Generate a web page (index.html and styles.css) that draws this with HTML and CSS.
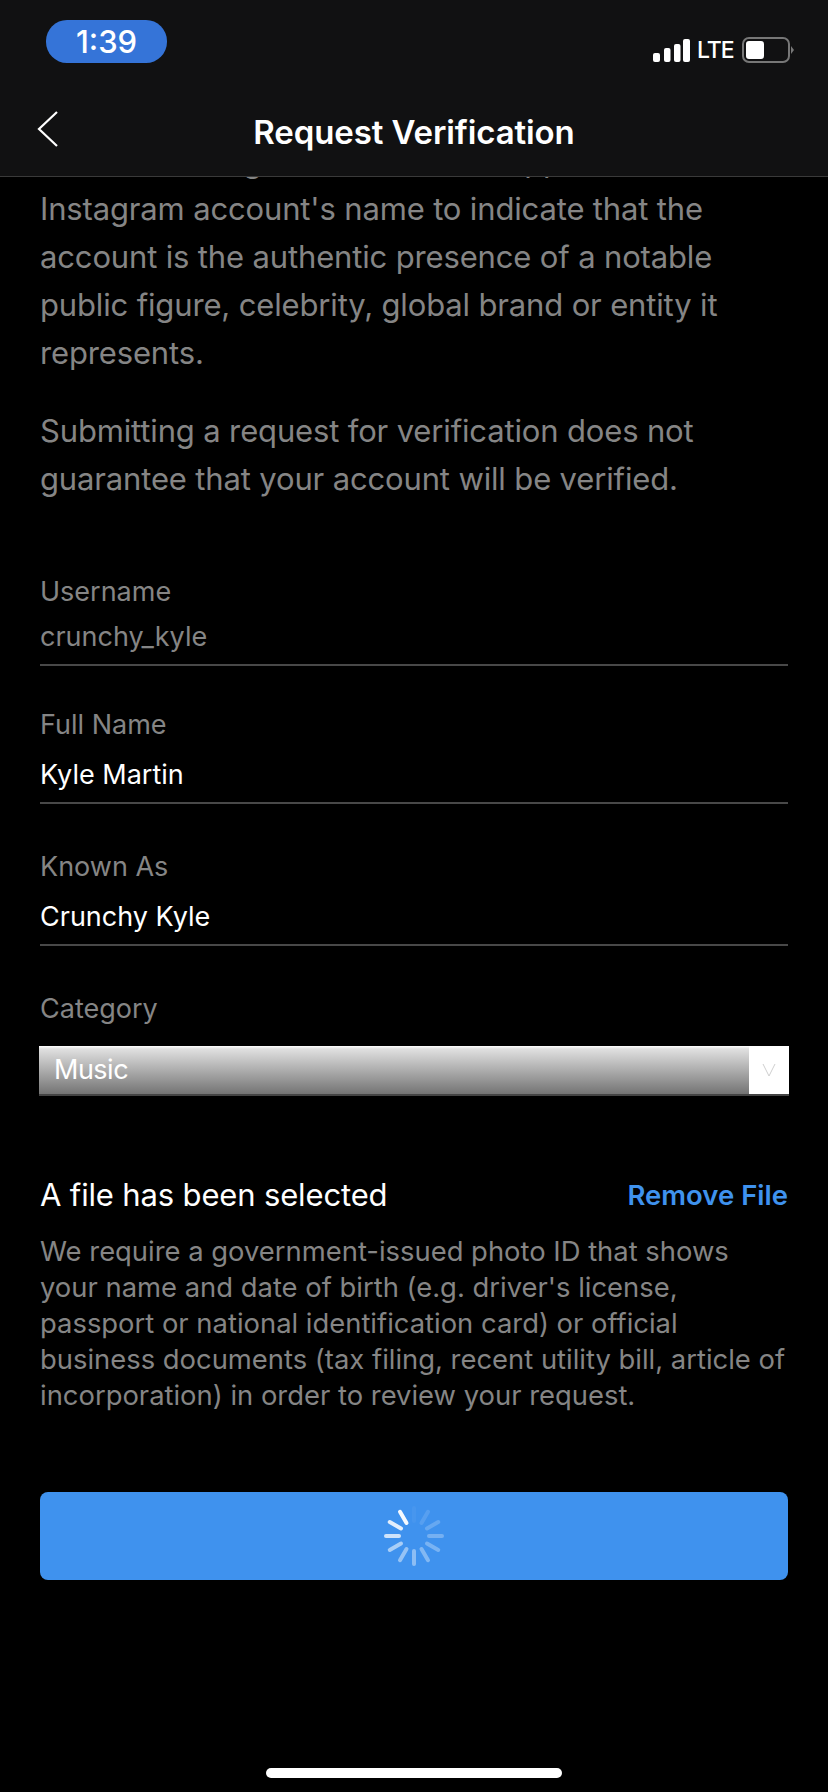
FILE: index.html
```html
<!DOCTYPE html>
<html lang="en">
<head>
    <meta charset="UTF-8">
    <meta name="viewport" content="width=device-width, initial-scale=1.0">
    <title>Request Verification</title>
    <link rel="stylesheet" href="styles.css">
</head>
<body>
    <div class="app">
        <header class="top">
            <div class="status">
                <div class="clock">1:39</div>
                <div class="status-icons">
                    <svg class="signal" width="37" height="23" viewBox="0 0 37 23">
                        <rect x="0" y="14" width="7" height="9" rx="2" fill="#fff"/>
                        <rect x="11" y="9" width="6.5" height="14" rx="2" fill="#fff"/>
                        <rect x="21" y="5" width="6.5" height="18" rx="2" fill="#fff"/>
                        <rect x="30" y="0" width="7" height="23" rx="2" fill="#fff"/>
                    </svg>
                    <span class="lte">LTE</span>
                    <svg class="battery" width="52" height="26" viewBox="0 0 52 26">
                        <rect x="1" y="1" width="46" height="24" rx="6" fill="none" stroke="#777" stroke-width="2"/>
                        <rect x="4" y="4" width="18" height="18" rx="3" fill="#fff"/>
                        <path d="M49 9 L52 13 L49 17 Z" fill="#777"/>
                    </svg>
                </div>
            </div>
            <nav class="bar">
                <svg class="back" width="24" height="36" viewBox="0 0 24 36">
                    <path d="M21 1 L3 18 L21 35" fill="none" stroke="#fff" stroke-width="2.2"/>
                </svg>
                <h1>Request Verification</h1>
            </nav>
        </header>

        <main class="content">
            <div class="intro">
                <p>A verified badge is a check that appears next to an Instagram account's name to indicate that the account is the authentic presence of a notable public figure, celebrity, global brand or entity it represents.</p>
                <p>Submitting a request for verification does not guarantee that your account will be verified.</p>
            </div>

            <div class="field field-readonly">
                <label>Username</label>
                <div class="field-value">crunchy_kyle</div>
            </div>
            <div class="field">
                <label>Full Name</label>
                <div class="field-value">Kyle Martin</div>
            </div>
            <div class="field">
                <label>Known As</label>
                <div class="field-value">Crunchy Kyle</div>
            </div>

            <div class="category">
                <label>Category</label>
                <div class="select">
                    <span class="select-value">Music</span>
                    <span class="select-arrow">
                        <svg width="14" height="14" viewBox="0 0 14 14">
                            <path d="M1 1 L7 13 L13 1" fill="none" stroke="#cfcfcf" stroke-width="1"/>
                        </svg>
                    </span>
                </div>
            </div>

            <div class="file-row">
                <span class="file-name">A file has been selected</span>
                <a class="file-remove">Remove File</a>
            </div>
            <p class="file-note">We require a government-issued photo ID that shows your name and date of birth (e.g. driver's license, passport or national identification card) or official business documents (tax filing, recent utility bill, article of incorporation) in order to review your request.</p>

            <button class="submit" type="button">
                <svg width="64" height="64" viewBox="0 0 64 64">
                    <g stroke="#fff" stroke-width="4" stroke-linecap="round">
                        <line x1="32" y1="4" x2="32" y2="17" opacity="0.04"/>
                        <line x1="32" y1="4" x2="32" y2="17" opacity="0.12" transform="rotate(30 32 32)"/>
                        <line x1="32" y1="4" x2="32" y2="17" opacity="0.2" transform="rotate(60 32 32)"/>
                        <line x1="32" y1="4" x2="32" y2="17" opacity="0.28" transform="rotate(90 32 32)"/>
                        <line x1="32" y1="4" x2="32" y2="17" opacity="0.3" transform="rotate(120 32 32)"/>
                        <line x1="32" y1="4" x2="32" y2="17" opacity="0.35" transform="rotate(150 32 32)"/>
                        <line x1="32" y1="4" x2="32" y2="17" opacity="0.4" transform="rotate(180 32 32)"/>
                        <line x1="32" y1="4" x2="32" y2="17" opacity="0.45" transform="rotate(210 32 32)"/>
                        <line x1="32" y1="4" x2="32" y2="17" opacity="0.55" transform="rotate(240 32 32)"/>
                        <line x1="32" y1="4" x2="32" y2="17" opacity="0.75" transform="rotate(270 32 32)"/>
                        <line x1="32" y1="4" x2="32" y2="17" opacity="0.85" transform="rotate(300 32 32)"/>
                        <line x1="32" y1="4" x2="32" y2="17" opacity="0.95" transform="rotate(330 32 32)"/>
                    </g>
                </svg>
            </button>
        </main>

        <div class="home-bar"></div>
    </div>
</body>
</html>
```

FILE: styles.css
```css
:root {
    --header: #111112;
    --muted: #858585;
    --blue: #3f92ee;
    --line: #484848;
}

* {
    box-sizing: border-box;
}

body {
    margin: 0;
    background: #000;
    color: #fff;
    font-family: Inter, "Liberation Sans", sans-serif;
}

.app {
    width: 828px;
    height: 1792px;
    display: flex;
    flex-direction: column;
    overflow: hidden;
}

.top {
    height: 177px;
    flex: none;
    background: var(--header);
    border-bottom: 1px solid #3a3a3a;
}

.status {
    height: 88px;
    padding: 20px 34px 0 46px;
    display: flex;
    justify-content: space-between;
    align-items: flex-start;
}

.clock {
    width: 121px;
    height: 43px;
    border-radius: 21px;
    background: #3574d8;
    font-size: 31px;
    font-weight: 500;
    line-height: 43px;
    text-align: center;
}

.status-icons {
    display: flex;
    align-items: center;
    gap: 7px;
    margin-top: 17px;
}

.lte {
    width: 38px;
    font-size: 23px;
    font-weight: 500;
    letter-spacing: -1px;
    line-height: 26px;
}

.bar {
    height: 88px;
    padding: 0 36px;
    display: grid;
    grid-template-columns: 60px 1fr 60px;
    align-items: center;
}

.back {
    margin-bottom: 6px;
}

.bar h1 {
    margin: 0;
    text-align: center;
    font-size: 33px;
    font-weight: 600;
    letter-spacing: -0.1px;
}

.content {
    flex: 1;
    padding: 0 40px;
    overflow: hidden;
}

.intro {
    margin-top: -40px;
    margin-bottom: 69px;
}

.intro p {
    margin: 0 0 30px;
    color: var(--muted);
    font-size: 31px;
    letter-spacing: -0.15px;
    line-height: 48px;
}

.field {
    padding-bottom: 7px;
    margin-bottom: 43px;
    border-bottom: 2px solid var(--line);
}

label {
    display: block;
    color: var(--muted);
    font-size: 27px;
    line-height: 40px;
}

.field-value {
    margin-top: 10px;
    font-size: 27px;
    line-height: 40px;
}

.field-readonly {
    margin-bottom: 39px;
}

.field-readonly .field-value {
    margin-top: 5px;
    color: var(--muted);
}

.category label {
    margin-bottom: 17px;
}

.select {
    margin: 0 -1px;
    height: 50px;
    display: flex;
    background: linear-gradient(#fff 0, #e0e0e0 6%, #747474 100%);
    border-bottom: 2px solid #444;
}

.select-value {
    flex: 1;
    padding-left: 15px;
    font-size: 27px;
    letter-spacing: -0.5px;
    line-height: 48px;
}

.select-arrow {
    width: 40px;
    background: #fff;
    display: flex;
    align-items: center;
    justify-content: center;
}

.file-row {
    margin-top: 79px;
    display: flex;
    justify-content: space-between;
    align-items: center;
    line-height: 40px;
}

.file-name {
    font-size: 31px;
    letter-spacing: -0.15px;
}

.file-remove {
    color: var(--blue);
    font-size: 27.5px;
    font-weight: 600;
}

.file-note {
    margin: 18px 0 0;
    color: var(--muted);
    font-size: 27.4px;
    line-height: 36px;
}

.submit {
    width: 100%;
    height: 88px;
    margin-top: 79px;
    background: var(--blue);
    border: none;
    border-radius: 8px;
    display: flex;
    align-items: center;
    justify-content: center;
}

.home-bar {
    width: 296px;
    height: 10px;
    margin: 0 auto 14px;
    flex: none;
    border-radius: 5px;
    background: #fff;
}
```
